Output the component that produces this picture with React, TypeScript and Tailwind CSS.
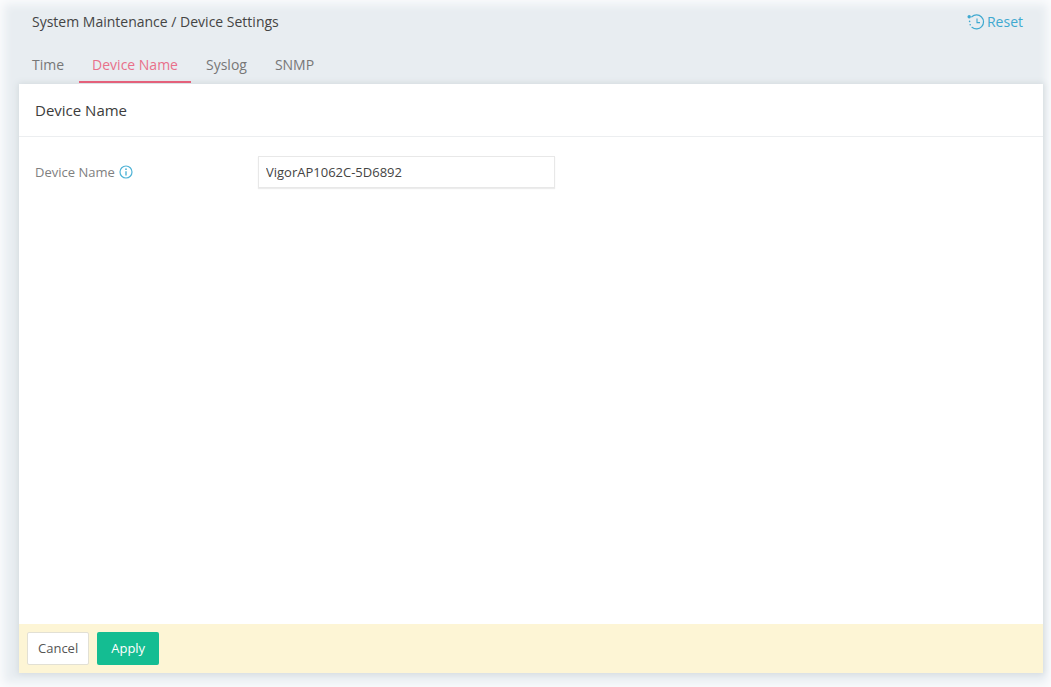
import { useState } from 'react'

const TABS = ['Time', 'Device Name', 'Syslog', 'SNMP']
const DEFAULT_NAME = 'VigorAP1062C-5D6892'

function ResetIcon() {
  return (
    <svg width="18" height="18" viewBox="0 0 18 18" fill="none" stroke="currentColor" aria-hidden="true">
      <path d="M4.8 3.8A7 7 0 1 1 5 14.3" strokeWidth="1.2" strokeLinecap="round" />
      <path d="M10 5.6V9.6H13" strokeWidth="1.1" />
      <circle cx="2.2" cy="3.8" r="1.7" fill="currentColor" stroke="none" />
      <circle cx="2.6" cy="8.4" r="0.8" fill="currentColor" stroke="none" />
      <circle cx="3.2" cy="11.8" r="0.8" fill="currentColor" stroke="none" />
    </svg>
  )
}

function InfoIcon() {
  return (
    <svg width="14" height="14" viewBox="0 0 14 14" fill="none" stroke="currentColor" aria-hidden="true">
      <circle cx="7" cy="7" r="6" strokeWidth="1.2" />
      <path d="M7 6.2V10.4" strokeWidth="1.4" />
      <circle cx="7" cy="4.2" r="0.9" fill="currentColor" stroke="none" />
    </svg>
  )
}

export default function App() {
  const [activeTab, setActiveTab] = useState('Device Name')
  const [deviceName, setDeviceName] = useState(DEFAULT_NAME)

  const restore = () => setDeviceName(DEFAULT_NAME)

  return (
    <div className="flex min-h-screen flex-col bg-[#e8edf1] pr-2 pb-3.5 pl-[19px] font-['Open_Sans','Noto_Sans',sans-serif] text-sm text-[#444] shadow-[inset_0_0_10px_4px_#fbfcfd]">
      <header className="flex items-center justify-between pt-3 pr-5 pl-[13px]">
        <h1 className="leading-5">System Maintenance / Device Settings</h1>
        <button type="button" onClick={restore} className="flex items-center gap-0.5 leading-5 text-[#3fa9d0]">
          <ResetIcon />
          Reset
        </button>
      </header>

      <nav className="relative z-10 mt-5 flex pb-px">
        {TABS.map((tab) => (
          <button
            key={tab}
            type="button"
            onClick={() => setActiveTab(tab)}
            className={`h-[31px] border-b-2 px-[13px] pb-1 leading-5 not-first:ml-0.5 ${
              tab === activeTab ? 'border-[#e4607a] text-[#e8708a]' : 'border-transparent text-[#777]'
            }`}
          >
            {tab}
          </button>
        ))}
      </nav>

      <main className="flex grow flex-col bg-white shadow-[0_0_6px_1px_#d3dade]">
        <h2 className="border-b border-[#eceef0] px-4 pt-4 pb-4 text-[15px] leading-5 font-medium text-[#3c3c3c]">
          Device Name
        </h2>

        <div className="flex grow items-start px-4 pt-[19px]">
          <div className="flex h-8 w-[223px] items-center gap-1">
            <label htmlFor="device-name" className="text-[13px] text-[#808080]">
              Device Name
            </label>
            <span className="text-[#4fb3d6]">
              <InfoIcon />
            </span>
          </div>
          <input
            id="device-name"
            type="text"
            value={deviceName}
            onChange={(e) => setDeviceName(e.target.value)}
            className="h-8 w-[297px] border border-[#e8e8e8] bg-white px-[7px] text-[13px] text-[#444] shadow-[0_1px_1px_#ececec] outline-none focus:border-[#4fb3d6]"
          />
        </div>

        <footer className="flex gap-2 bg-[#fdf5d5] px-2 py-2">
          <button
            type="button"
            onClick={restore}
            className="h-[33px] rounded-xs border border-[#e2e0d4] bg-white px-2.5 text-[13px] text-[#555]"
          >
            Cancel
          </button>
          <button type="button" className="h-[33px] rounded-xs bg-[#14bd92] px-3.5 text-[13px] text-white">
            Apply
          </button>
        </footer>
      </main>
    </div>
  )
}
